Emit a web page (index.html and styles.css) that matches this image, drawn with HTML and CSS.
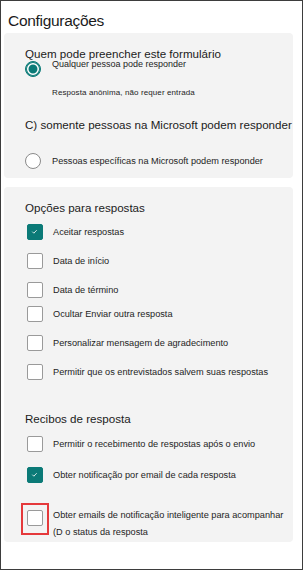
FILE: index.html
```html
<!DOCTYPE html>
<html lang="pt">
<head>
    <meta charset="UTF-8">
    <meta name="viewport" content="width=device-width, initial-scale=1.0">
    <title>Configurações</title>
    <link rel="stylesheet" href="styles.css">
</head>
<body>
    <div class="frame">
        <h1 class="title">Configurações</h1>

        <!-- Quem pode responder -->
        <div class="card card-who">
            <h2 class="group-title">Quem pode preencher este formulário</h2>
            <div class="radio-row first">
                <span class="radio on"></span>
                <div class="radio-text">
                    <p class="label">Qualquer pessoa pode responder</p>
                    <p class="hint">Resposta anônima, não requer entrada</p>
                </div>
            </div>
            <h2 class="group-title ms">C) somente pessoas na Microsoft podem responder</h2>
            <div class="radio-row second">
                <span class="radio"></span>
                <p class="label">Pessoas específicas na Microsoft podem responder</p>
            </div>
        </div>

        <!-- Opções para respostas -->
        <div class="card card-options">
            <h2 class="group-title">Opções para respostas</h2>
            <div class="list">
                <div class="check-row">
                    <span class="box on"><svg viewBox="0 0 16 16"><path d="M5.3 8.2l1.9 1.9 3.5-3.7"/></svg></span>
                    <p class="label">Aceitar respostas</p>
                </div>
                <div class="check-row">
                    <span class="box"></span>
                    <p class="label">Data de início</p>
                </div>
                <div class="check-row">
                    <span class="box"></span>
                    <p class="label">Data de término</p>
                </div>
                <div class="check-row tight">
                    <span class="box"></span>
                    <p class="label">Ocultar Enviar outra resposta</p>
                </div>
                <div class="check-row">
                    <span class="box"></span>
                    <p class="label">Personalizar mensagem de agradecimento</p>
                </div>
                <div class="check-row">
                    <span class="box"></span>
                    <p class="label">Permitir que os entrevistados salvem suas respostas</p>
                </div>
            </div>

            <h2 class="group-title receipts">Recibos de resposta</h2>
            <div class="list receipts-list">
                <div class="check-row">
                    <span class="box"></span>
                    <p class="label">Permitir o recebimento de respostas após o envio</p>
                </div>
                <div class="check-row wide">
                    <span class="box on"><svg viewBox="0 0 16 16"><path d="M5.3 8.2l1.9 1.9 3.5-3.7"/></svg></span>
                    <p class="label">Obter notificação por email de cada resposta</p>
                </div>
                <div class="check-row multi">
                    <span class="mark"><span class="box"></span></span>
                    <p class="label">Obter emails de notificação inteligente para acompanhar<br>(D o status da resposta</p>
                </div>
            </div>
        </div>
    </div>
</body>
</html>
```

FILE: styles.css
```css
body {
    margin: 0;
    font-family: "Liberation Sans", Arial, sans-serif;
    color: #242424;
    background-color: #fff;
}
p, h1, h2 {
    margin: 0;
    font-weight: normal;
}
.frame {
    box-sizing: border-box;
    width: 303px;
    height: 570px;
    border: 1px solid #3d3d3d;
    padding: 11px 9px 0 3px;
}
.title {
    font-size: 15.5px;
    line-height: 18px;
    letter-spacing: -0.3px;
    color: #1b1b1b;
    margin-left: 4px;
}
.card {
    background-color: #f3f3f3;
    border-radius: 4px;
    padding: 14px 6px 0 21px;
}
.card-who {
    margin-top: 3px;
    padding-bottom: 9px;
}
.card-options {
    margin-top: 9px;
    padding-bottom: 16px;
}
.group-title {
    font-size: 11.6px;
    line-height: 14px;
    color: #1b1b1b;
    white-space: nowrap;
}
.label {
    font-size: 9.2px;
    line-height: 11px;
    white-space: nowrap;
}

/* boutons radio */
.radio-row {
    display: flex;
    align-items: flex-start;
    gap: 11px;
}
.radio-row.first {
    margin-top: 0;
}
.radio-row.second {
    margin-top: 21px;
    align-items: center;
}
.radio-text {
    margin-top: -2px;
}
.radio-text .label {
    font-size: 9px;
}
.hint {
    font-size: 8px;
    line-height: 10px;
    margin-top: 18px;
    letter-spacing: 0.1px;
}
.radio {
    flex: none;
    box-sizing: border-box;
    width: 16px;
    height: 16px;
    border-radius: 50%;
    border: 1px solid #8a8a8a;
    background-color: #fff;
}
.radio.on {
    border-color: #0b7a77;
    background-color: #0b7a77;
    box-shadow: inset 0 0 0 1px #0b7a77, inset 0 0 0 2.5px #fff;
}
.group-title.ms {
    margin-top: 20px;
}

/* cases à cocher */
.list {
    display: flex;
    flex-direction: column;
    gap: 13px;
    margin-top: 9px;
}
.check-row {
    display: flex;
    align-items: center;
    gap: 10px;
    height: 16px;
}
.check-row.tight {
    margin-top: -5px;
}
.check-row.wide {
    margin-top: 2px;
}
.check-row.multi {
    align-items: flex-start;
    margin-top: 14px;
}
.check-row.multi .label {
    line-height: 17px;
    margin-top: -3px;
}
.box {
    flex: none;
    box-sizing: border-box;
    width: 16px;
    height: 16px;
    margin-left: 2px;
    border: 1.5px solid #9a9a9a;
    border-radius: 2px;
    background-color: #fff;
}
.box.on {
    border-color: #0b7a77;
    background-color: #0b7a77;
}
.box svg {
    display: block;
    width: 13px;
    height: 13px;
    fill: none;
    stroke: #fff;
    stroke-width: 1;
}
.mark {
    flex: none;
    display: flex;
    border: 2px solid #e5393b;
    padding: 5px 4px 7px;
    margin: -7px -6px -9px -4px;
}
.mark .box {
    margin-left: 0;
}
.group-title.receipts {
    margin-top: 32px;
}
.receipts-list {
    margin-top: 10px;
}
```
